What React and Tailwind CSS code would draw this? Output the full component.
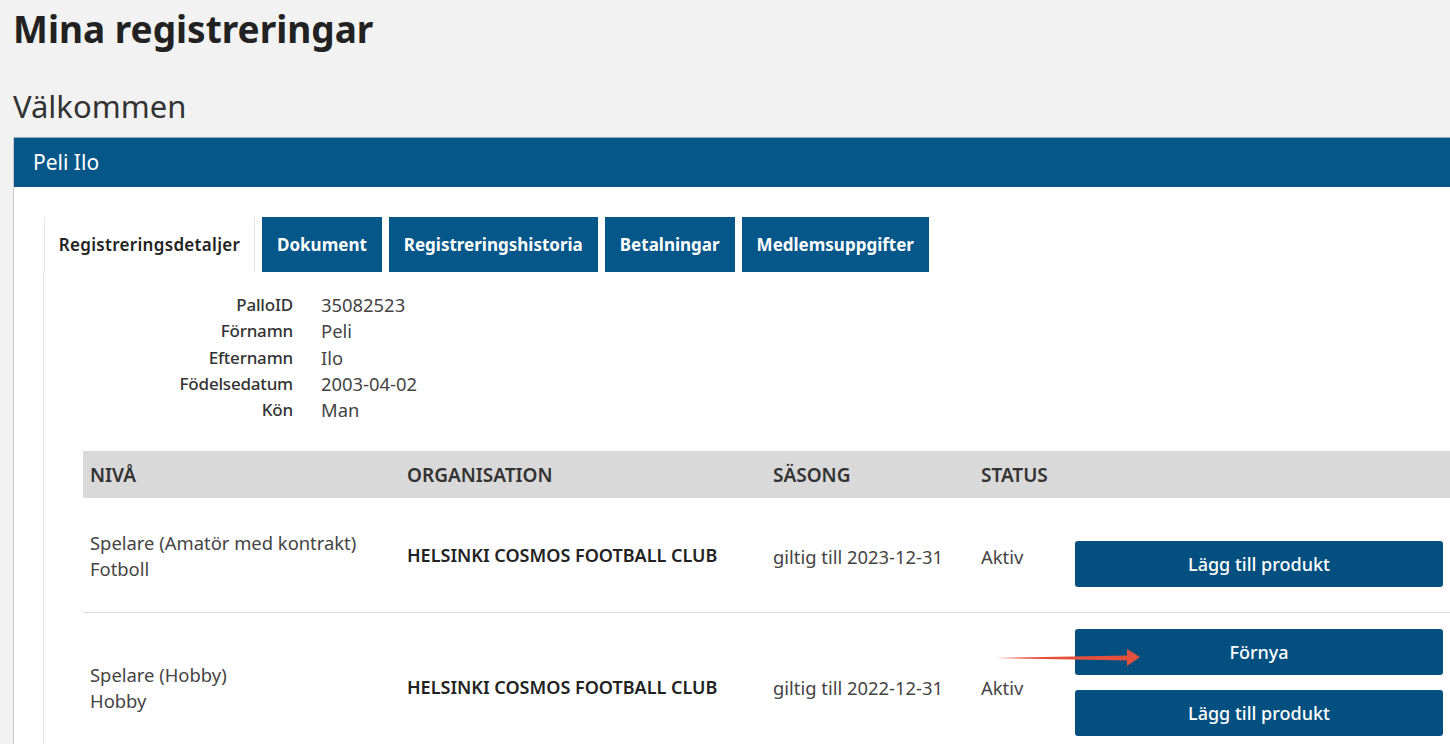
import React from "react";

const font = { fontFamily: '"Noto Sans", "Open Sans", sans-serif' };

const tabs = ["Dokument", "Registreringshistoria", "Betalningar", "Medlemsuppgifter"];

const details = [
  ["PalloID", "35082523"],
  ["Förnamn", "Peli"],
  ["Efternamn", "Ilo"],
  ["Födelsedatum", "2003-04-02"],
  ["Kön", "Man"],
];

const cols = "grid grid-cols-[317px_366px_208px_93px_1fr]";

function ActionButton({ children }) {
  return (
    <button className="h-[46px] w-[368px] rounded-[3px] bg-[#034f80] text-[18px] font-medium text-white">
      {children}
    </button>
  );
}

function RenewArrow() {
  return (
    <svg
      className="pointer-events-none absolute left-[990px] top-[644px]"
      width="160"
      height="28"
      viewBox="0 0 160 28"
    >
      <polygon points="5,14 138,11.5 138,16.5" fill="#e4503b" />
      <polygon points="137,5 150,13 137,22" fill="#e4503b" />
    </svg>
  );
}

export default function App() {
  return (
    <div
      className="relative h-[744px] w-[1450px] overflow-hidden bg-[#f2f2f2] text-[#333]"
      style={font}
    >
      <h1 className="pl-[13px] pt-[3px] text-[37px] font-bold leading-[52px] text-[#222]">
        Mina registreringar
      </h1>
      <h2 className="mt-[31px] pl-[13px] text-[31px] leading-[40px] text-[#333]">Välkommen</h2>

      <div className="ml-[13px] mt-[11px] w-[1480px] border-l border-[#c8c8c8] bg-white">
        <div className="flex h-[50px] items-center border-t border-[#9ab] bg-[#05578a] pl-[19px] text-[21px] text-white">
          Peli Ilo
        </div>

        <div className="pl-[30px] pt-[30px]">
          {/* tab strip */}
          <div className="flex h-[55px]">
            <div className="flex w-[211px] items-center justify-center border-l border-r border-[#e3e3e3] text-[17px] font-semibold tracking-[0.3px] text-[#222]">
              Registreringsdetaljer
            </div>
            <div className="ml-[7px] flex gap-[7px]">
              {tabs.map((t) => (
                <div
                  key={t}
                  className="flex items-center bg-[#05578a] px-[15px] text-[17px] font-bold text-white"
                >
                  {t}
                </div>
              ))}
            </div>
          </div>

          {/* tab content */}
          <div className="-ml-px border-l border-[#e3e3e3] pb-[40px] pl-[39px] pt-[20px]">
            <div className="grid grid-cols-[210px_1fr] gap-x-[28px] leading-[26.3px]">
              {details.map(([k, v]) => (
                <React.Fragment key={k}>
                  <div className="text-right text-[17px] font-medium tracking-[-0.2px] text-[#333]">{k}</div>
                  <div className="text-[18.4px] text-[#444]">{v}</div>
                </React.Fragment>
              ))}
            </div>

            <div className="mt-[28px]">
              <div className={`${cols} h-[47px] items-center bg-[#d9d9d9] text-[19px] font-semibold text-[#333]`}>
                <div className="pl-[7px]">NIVÅ</div>
                <div className="pl-[7px]">ORGANISATION</div>
                <div className="pl-[7px]">SÄSONG</div>
                <div className="pl-[7px]">STATUS</div>
                <div />
              </div>

              <div className={`${cols} items-center text-[18.4px]`}>
                <div className="pl-[7px] pt-[2px] leading-[26px] text-[#444]">
                  <div>Spelare (Amatör med kontrakt)</div>
                  <div>Fotboll</div>
                </div>
                <div className="pl-[7px] text-[18px] font-semibold text-[#222]">HELSINKI COSMOS FOOTBALL CLUB</div>
                <div className="pl-[7px] pt-[2px] text-[#444]">giltig till 2023-12-31</div>
                <div className="pl-[7px] pt-[2px] text-[#444]">Aktiv</div>
                <div className="flex flex-col self-start pb-[25px] pl-[8px] pt-[43px]">
                  <ActionButton>Lägg till produkt</ActionButton>
                </div>
              </div>

              <div className={`${cols} items-center border-t border-[#dcdcdc] text-[18.4px]`}>
                <div className="pl-[7px] leading-[26px] text-[#444]">
                  <div>Spelare (Hobby)</div>
                  <div>Hobby</div>
                </div>
                <div className="pl-[7px] text-[18px] font-semibold text-[#222]">HELSINKI COSMOS FOOTBALL CLUB</div>
                <div className="pl-[7px] text-[#444]">giltig till 2022-12-31</div>
                <div className="pl-[7px] text-[#444]">Aktiv</div>
                <div className="flex flex-col gap-[15px] self-start pb-[26px] pl-[8px] pt-[16px]">
                  <ActionButton>Förnya</ActionButton>
                  <ActionButton>Lägg till produkt</ActionButton>
                </div>
              </div>
            </div>
          </div>
        </div>
      </div>

      <RenewArrow />
    </div>
  );
}
